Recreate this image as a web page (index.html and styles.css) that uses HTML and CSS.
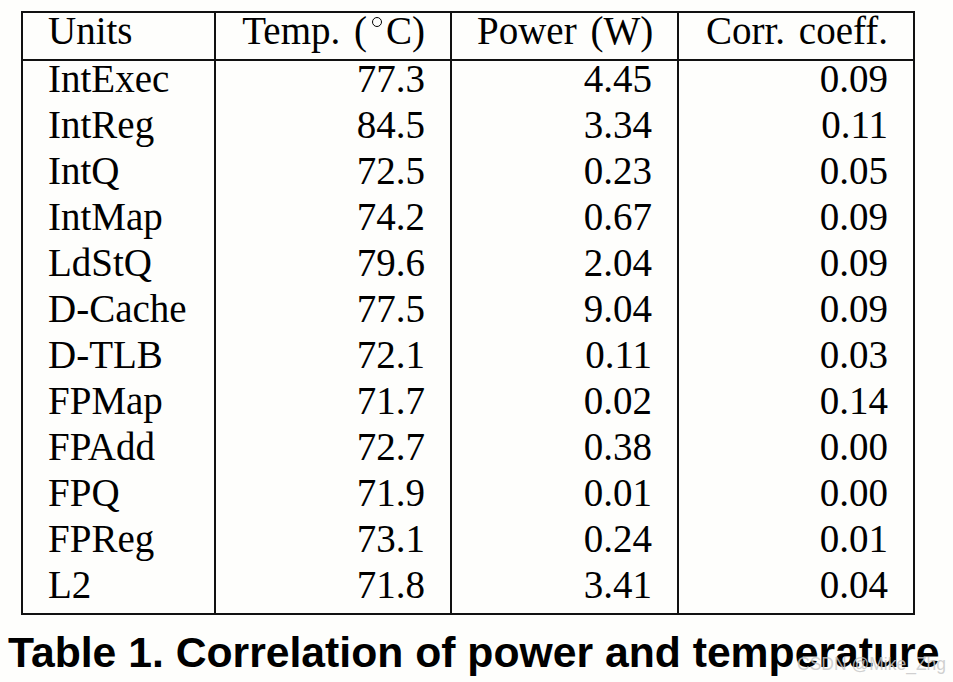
FILE: index.html
```html
<!DOCTYPE html>
<html>
<head>
<meta charset="utf-8">
<link rel="stylesheet" href="styles.css">
</head>
<body>
<div class="page">
  <table class="data">
    <colgroup>
      <col class="c1"><col class="c2"><col class="c3"><col class="c4">
    </colgroup>
    <thead>
      <tr><th class="left">Units</th><th>Temp. (<span class="deg"></span>C)</th><th>Power (W)</th><th>Corr. coeff.</th></tr>
    </thead>
    <tbody>
      <tr><td class="left">IntExec</td><td>77.3</td><td>4.45</td><td>0.09</td></tr>
      <tr><td class="left">IntReg</td><td>84.5</td><td>3.34</td><td>0.11</td></tr>
      <tr><td class="left">IntQ</td><td>72.5</td><td>0.23</td><td>0.05</td></tr>
      <tr><td class="left">IntMap</td><td>74.2</td><td>0.67</td><td>0.09</td></tr>
      <tr><td class="left">LdStQ</td><td>79.6</td><td>2.04</td><td>0.09</td></tr>
      <tr><td class="left">D-Cache</td><td>77.5</td><td>9.04</td><td>0.09</td></tr>
      <tr><td class="left">D-TLB</td><td>72.1</td><td>0.11</td><td>0.03</td></tr>
      <tr><td class="left">FPMap</td><td>71.7</td><td>0.02</td><td>0.14</td></tr>
      <tr><td class="left">FPAdd</td><td>72.7</td><td>0.38</td><td>0.00</td></tr>
      <tr><td class="left">FPQ</td><td>71.9</td><td>0.01</td><td>0.00</td></tr>
      <tr><td class="left">FPReg</td><td>73.1</td><td>0.24</td><td>0.01</td></tr>
      <tr><td class="left">L2</td><td>71.8</td><td>3.41</td><td>0.04</td></tr>
    </tbody>
  </table>
  <div class="caption-wrap">
    <p class="caption">Table 1. Correlation of power and temperature</p>
    <span class="watermark">CSDN @Mike_Zhg</span>
  </div>
</div>
</body>
</html>
```

FILE: styles.css
```css
html, body {
  margin: 0;
  padding: 0;
  background: #fefefc;
}
.page {
  width: 953px;
  height: 682px;
  padding: 11px 0 0 21px;
  box-sizing: border-box;
  position: relative;
  overflow: hidden;
}
.data {
  border-collapse: collapse;
  table-layout: fixed;
  width: 892px;
  font-family: "Liberation Serif", "Times New Roman", serif;
  font-size: 39px;
  color: #000;
}
.c1 { width: 193px; }
.c2 { width: 236px; }
.c3 { width: 227px; }
.c4 { width: 236px; }
.data th, .data td {
  border-left: 2px solid #111;
  border-right: 2px solid #111;
  padding: 0 25px 10px 25px;
  line-height: 36px;
  text-align: right;
  font-weight: normal;
  white-space: nowrap;
}
.data th {
  word-spacing: 4px;
}
.data thead th {
  border-top: 2px solid #111;
  border-bottom: 2px solid #111;
}
.data tbody tr:last-child td {
  border-bottom: 2px solid #111;
}
.data .left {
  text-align: left;
}
.deg {
  display: inline-block;
  width: 8px;
  height: 8px;
  border: 1.5px solid #000;
  border-radius: 50%;
  margin: 0 4px 0 5px;
  vertical-align: 17px;
}
.caption-wrap {
  position: relative;
  margin-left: -13px;
  margin-top: 12px;
}
.caption {
  margin: 0;
  font-family: "Liberation Sans", Arial, sans-serif;
  font-weight: bold;
  font-size: 42.7px;
  line-height: 50px;
  color: #000;
}
.watermark {
  position: absolute;
  left: 789px;
  top: 26px;
  font-family: "Liberation Sans", Arial, sans-serif;
  font-size: 17.5px;
  line-height: 22px;
  color: rgba(200, 200, 200, 0.85);
  white-space: nowrap;
}
```
